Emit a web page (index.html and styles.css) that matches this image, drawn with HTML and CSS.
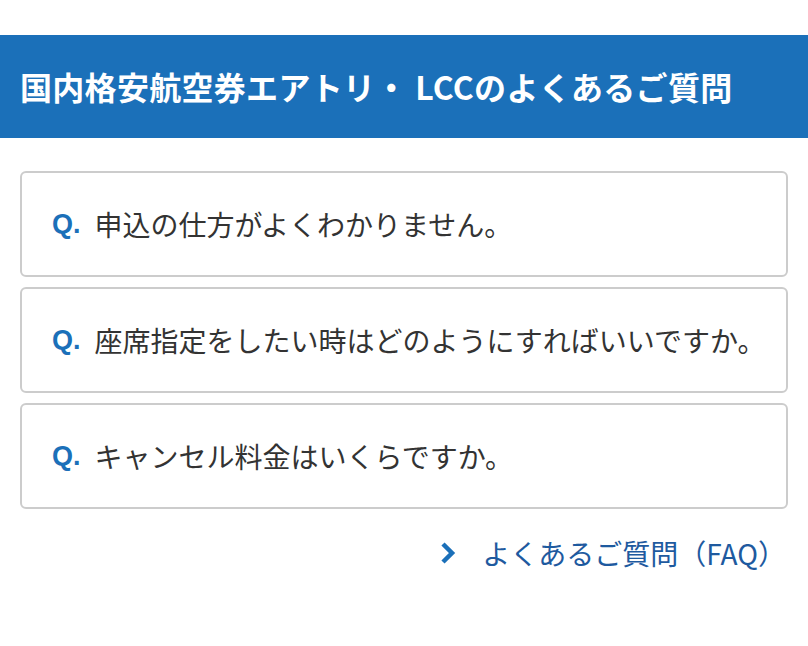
FILE: index.html
```html
<!DOCTYPE html>
<html lang="ja">

<head>
    <meta charset="UTF-8">
    <meta name="viewport" content="width=device-width, initial-scale=1.0">
    <title>よくあるご質問</title>
    <link rel="stylesheet" href="styles.css">
</head>

<body>
    <div class="faq">
        <h2 class="faq-title">国内格安航空券エアトリ・ LCCのよくあるご質問</h2>
        <ul class="faq-list">
            <li class="faq-item"><span class="faq-q">Q.</span>申込の仕方がよくわかりません。</li>
            <li class="faq-item"><span class="faq-q">Q.</span>座席指定をしたい時はどのようにすればいいですか。</li>
            <li class="faq-item"><span class="faq-q">Q.</span>キャンセル料金はいくらですか。</li>
        </ul>
        <div class="faq-more">
            <a href="#">
                <svg class="chev" width="16" height="24" viewBox="0 0 16 24">
                    <path d="M3 3 L12 12 L3 21" fill="none" stroke="#1b70b9" stroke-width="4.5" />
                </svg>
                よくあるご質問（FAQ）
            </a>
        </div>
    </div>
</body>

</html>
```

FILE: styles.css
```css
body {
    font-family: "Noto Sans CJK JP", "Noto Sans", sans-serif;
    margin: 0;
    padding: 0;
    color: #333;
}

.faq {
    padding-top: 35px;
}

.faq-title {
    margin: 0;
    background-color: #1b70b9;
    color: #fff;
    font-size: 32px;
    font-weight: bold;
    height: 103px;
    line-height: 103px;
    padding: 0 20px;
    letter-spacing: 0.3px;
}

.faq-list {
    list-style-type: none;
    margin: 0;
    padding: 33px 20px 0;
    display: flex;
    flex-direction: column;
    gap: 10px;
}

.faq-item {
    box-sizing: border-box;
    border: 2px solid #ccc;
    border-radius: 6px;
    height: 106px;
    display: flex;
    align-items: center;
    padding-left: 30px;
    font-size: 28px;
}

.faq-q {
    color: #1b70b9;
    font-weight: bold;
    font-family: "Liberation Sans", Arial, sans-serif;
    font-size: 27px;
    margin-right: 14px;
}

.faq-more {
    display: flex;
    justify-content: flex-end;
    padding: 24px 22px 0 0;
}

.faq-more a {
    display: flex;
    align-items: center;
    gap: 26px;
    text-decoration: none;
    color: #1e5a9f;
    font-size: 28px;
}
```
